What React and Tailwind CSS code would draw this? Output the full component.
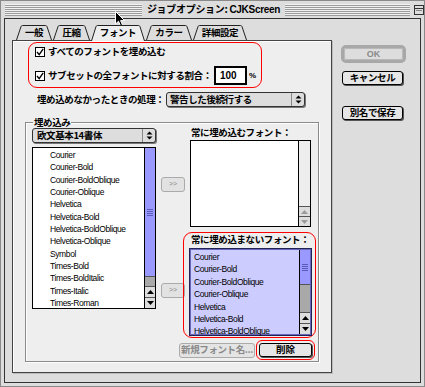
import React from "react";

const STRIPES =
  "bg-[repeating-linear-gradient(to_bottom,#f2f2f2_0px,#f2f2f2_1px,#9a9a9a_1px,#9a9a9a_2px)]";

function Tab({ label, className, active, w }) {
  const h = active ? 16 : 15;
  const d = `M0.5 ${h} L5 1.6 Q5.4 0.5 6.6 0.5 L${w - 6.6} 0.5 Q${w - 5.4} 0.5 ${w - 5} 1.6 L${w - 0.5} ${h}`;
  return (
    <div className={`relative h-[15px] flex items-center justify-center ${className} ${active ? "z-10" : ""}`}>
      <svg className="absolute left-0 top-0 overflow-visible" width={w} height={h} viewBox={`0 0 ${w} ${h}`}>
        <path d={d} fill={active ? "#eeeeee" : "#dddddd"} stroke="#222" strokeWidth="1" />
      </svg>
      <span className="relative text-[9.5px] font-bold leading-none tracking-[-0.4px] pt-[1px]">{label}</span>
    </div>
  );
}

function Check() {
  return (
    <div className="w-[10px] h-[10px] border border-black bg-white flex items-center justify-center shrink-0">
      <svg width="8" height="8" viewBox="0 0 8 8">
        <path d="M1 4 L3.2 6.6 L7.2 0.8" fill="none" stroke="#000" strokeWidth="1.4" />
      </svg>
    </div>
  );
}

function UpDown() {
  return (
    <svg width="7" height="9" viewBox="0 0 7 9">
      <path d="M0.5 3.5 L3.5 0.5 L6.5 3.5Z" fill="#000" />
      <path d="M0.5 5.5 L3.5 8.5 L6.5 5.5Z" fill="#000" />
    </svg>
  );
}

function Arrow({ up, disabled, h = "h-[11px]" }) {
  return (
    <div className={`${h} border-t border-[#555] bg-[#dddddd] flex items-center justify-center shrink-0`}>
      <svg width="7" height="4" viewBox="0 0 7 4">
        <path d={up ? "M0 4 L3.5 0 L7 4Z" : "M0 0 L3.5 4 L7 0Z"} fill={disabled ? "#9a9a9a" : "#000"} />
      </svg>
    </div>
  );
}

function Grip() {
  return (
    <svg width="6" height="7" viewBox="0 0 6 7">
      <path d="M0 0.5H6M0 2.5H6M0 4.5H6M0 6.5H6" stroke="#5a5ab8" strokeWidth="1" />
    </svg>
  );
}

const LEFT_ITEMS = [
  "Courier",
  "Courier-Bold",
  "Courier-BoldOblique",
  "Courier-Oblique",
  "Helvetica",
  "Helvetica-Bold",
  "Helvetica-BoldOblique",
  "Helvetica-Oblique",
  "Symbol",
  "Times-Bold",
  "Times-BoldItalic",
  "Times-Italic",
  "Times-Roman",
];

const RIGHT_ITEMS = [
  "Courier",
  "Courier-Bold",
  "Courier-BoldOblique",
  "Courier-Oblique",
  "Helvetica",
  "Helvetica-Bold",
  "Helvetica-BoldOblique",
];

export default function App() {
  return (
    <div className="relative w-[425px] h-[387px] overflow-hidden bg-[#dddddd] border border-[#8a8a8a] font-['Noto_Sans_CJK_JP',sans-serif] text-black">
      {/* Title bar */}
      <div className="h-[17px] flex items-center">
        <div className={`ml-[4px] w-[137px] h-[12px] ${STRIPES}`} />
        <div className="flex-1 text-center text-[10px] font-bold leading-none tracking-[-0.3px] whitespace-nowrap">
          ジョブオプション: <span className="font-['Liberation_Sans',sans-serif] text-[10px]">CJKScreen</span>
        </div>
        <div className={`w-[125px] h-[12px] ${STRIPES}`} />
        <div className="ml-[4px] w-[10px] h-[10px] border border-[#333] bg-[#dddddd] flex flex-col">
          <div className="h-[3px] border-b border-[#333]" />
          <div className="flex-1 mx-[1px] my-[1px] border-t border-[#888]" />
        </div>
      </div>

      {/* Window frame */}
      <div className="ml-[3px] w-[417px] h-[365px] border border-[#333] flex">
        {/* Left column: tabs + panel */}
        <div className="ml-[7px] flex flex-col">
          <div className="ml-[4px] mt-[6px] h-[15px] flex gap-[1px]">
            <Tab label="一般" w={36} className="w-[36px]" />
            <Tab label="圧縮" w={37} className="w-[37px]" />
            <Tab label="フォント" w={54} className="w-[54px]" active />
            <Tab label="カラー" w={46} className="w-[46px]" />
            <Tab label="詳細設定" w={54} className="w-[54px]" />
          </div>

          {/* Panel */}
          <div className="w-[320px] h-[333px] border border-[#444] bg-[#eeeeee] shadow-[inset_1px_1px_0_#ffffff,1px_1px_0_#bbbbbb] flex flex-col">
            {/* Red box 1 */}
            <div className="ml-[15px] mt-[1px] w-[234px] h-[46px] border border-[#ff0000] rounded-[9px] flex flex-col">
              <div className="ml-[6px] mt-[3px] h-[12px] flex items-center gap-[3px]">
                <Check />
                <span className="text-[9.5px] font-bold leading-none tracking-[-0.4px] whitespace-nowrap">
                  すべてのフォントを埋め込む
                </span>
              </div>
              <div className="ml-[6px] mt-[8px] h-[19px] flex items-center">
                <Check />
                <span className="ml-[3px] w-[166px] text-[9.5px] font-bold leading-none tracking-[-0.4px] whitespace-nowrap">
                  サブセットの全フォントに対する割合：
                </span>
                <div className="w-[33px] h-[19px] border-2 border-black bg-white flex items-center pl-[4px] text-[10px] font-bold leading-none font-['Liberation_Sans',sans-serif]">
                  100
                </div>
                <span className="ml-[2px] text-[8px] font-bold leading-none font-['Liberation_Sans',sans-serif]">%</span>
              </div>
            </div>

            {/* Failure handling row */}
            <div className="mt-[4px] ml-[24px] h-[15px] flex items-center">
              <span className="w-[129px] text-[9.5px] font-bold leading-none tracking-[-0.4px] whitespace-nowrap">
                埋め込めなかったときの処理：
              </span>
              <div className="w-[139px] h-[15px] border border-[#333] rounded-[3px] bg-[#dddddd] shadow-[1px_1px_0_#777777] flex items-center">
                <span className="flex-1 pl-[3px] text-[9.5px] font-bold leading-none tracking-[-0.4px] whitespace-nowrap">
                  警告した後続行する
                </span>
                <div className="w-[13px] h-full border-l border-[#888] flex items-center justify-center">
                  <UpDown />
                </div>
              </div>
            </div>

            {/* Group box */}
            <div className="relative mt-[15px] ml-[12px] w-[294px] h-[240px] border border-[#8a8a8a] shadow-[1px_1px_0_#ffffff,inset_1px_1px_0_#ffffff] flex">
              <span className="absolute left-[7px] -top-[7px] px-[1px] bg-[#eeeeee] text-[9.5px] font-bold leading-[12px] tracking-[-0.4px]">
                埋め込み
              </span>

              {/* Left column */}
              <div className="ml-[6px] w-[124px] flex flex-col">
                <div className="mt-[5px] h-[15px] border border-[#333] rounded-[3px] bg-[#dddddd] shadow-[1px_1px_0_#777777] flex items-center">
                  <span className="flex-1 pl-[4px] text-[9.5px] font-bold leading-none tracking-[-0.4px] whitespace-nowrap">
                    欧文基本14書体
                  </span>
                  <div className="w-[13px] h-full border-l border-[#888] flex items-center justify-center">
                    <UpDown />
                  </div>
                </div>
                <div className="mt-[4px] h-[162px] border border-black bg-white flex">
                  <div className="flex-1 pt-[1px] font-['Liberation_Sans',sans-serif] text-[8.5px] tracking-[-0.4px] text-black">
                    {LEFT_ITEMS.map((t) => (
                      <div key={t} className="h-[12.33px] leading-[12.33px] pl-[17px] whitespace-nowrap">
                        {t}
                      </div>
                    ))}
                  </div>
                  <div className="w-[11px] border-l border-black flex flex-col">
                    <div className="h-[128px] bg-[#9999ff] flex items-center justify-center">
                      <Grip />
                    </div>
                    <div className="flex-1 bg-[#a9a9a9] border-t border-[#555]" />
                    <Arrow up />
                    <Arrow />
                  </div>
                </div>
              </div>

              {/* Middle column */}
              <div className="ml-[5px] w-[24px] flex flex-col">
                <div className="mt-[54px] h-[15px] border border-[#aaaaaa] rounded-[3px] bg-[#e2e2e2] flex items-center justify-center text-[7px] text-[#888] font-['Liberation_Sans',sans-serif]">
                  &gt;&gt;
                </div>
                <div className="mt-[91px] h-[15px] border border-[#aaaaaa] rounded-[3px] bg-[#e2e2e2] flex items-center justify-center text-[7px] text-[#888] font-['Liberation_Sans',sans-serif]">
                  &gt;&gt;
                </div>
              </div>

              {/* Right column */}
              <div className="-ml-[2px] w-[133px] flex flex-col">
                <div className="mt-[2px] h-[15px] pl-[8px] flex items-center text-[9.5px] font-bold leading-none tracking-[-0.4px] whitespace-nowrap">
                  常に埋め込むフォント：
                </div>
                <div className="ml-[7px] w-[121px] h-[87px] border border-black bg-white flex">
                  <div className="flex-1" />
                  <div className="w-[12px] border-l border-black bg-[#eeeeee] flex flex-col justify-end">
                    <Arrow up disabled h="h-[10px]" />
                    <Arrow disabled h="h-[10px]" />
                  </div>
                </div>

                {/* Red box 2 */}
                <div className="mt-[5px] w-[133px] h-[106px] border border-[#ff0000] rounded-[9px] flex flex-col">
                  <div className="h-[14px] pl-[7px] flex items-center text-[9.5px] font-bold leading-none tracking-[-0.4px] whitespace-nowrap">
                    常に埋め込まないフォント：
                  </div>
                  <div className="mt-[1px] ml-[5px] w-[123px] h-[88px] border border-[#222255] shadow-[inset_0_0_0_1px_#6666bb] bg-[#ccccff] flex p-[1px]">
                    <div className="flex-1 pt-[1px] font-['Liberation_Sans',sans-serif] text-[8.5px] tracking-[-0.4px] text-black">
                      {RIGHT_ITEMS.map((t) => (
                        <div key={t} className="h-[12.4px] leading-[12.4px] pl-[3px] whitespace-nowrap">
                          {t}
                        </div>
                      ))}
                    </div>
                    <div className="w-[11px] border-l border-black flex flex-col">
                      <div className="h-[34px] bg-[#9999ff] flex items-center justify-center">
                        <Grip />
                      </div>
                      <div className="flex-1 bg-[#a9a9a9] border-t border-[#555]" />
                      <Arrow up />
                      <Arrow />
                    </div>
                  </div>
                </div>

                {/* Bottom buttons */}
                <div className="mt-[2px] h-[20px] flex items-center">
                  <div className="-ml-[4px] w-[76px] h-[15px] border border-[#aaaaaa] rounded-[3px] bg-[#e4e4e4] flex items-center justify-center text-[9.5px] font-bold text-[#8a8a8a] leading-none tracking-[-0.4px] whitespace-nowrap">
                    新規フォント名...
                  </div>
                  <div className="ml-[1px] w-[59px] h-[20px] border border-[#ff0000] rounded-[6px] flex items-center">
                    <div className="ml-[2px] w-[53px] h-[14px] border border-black rounded-[3px] bg-[#e6e6e6] shadow-[1px_1px_0_#555555] flex items-center justify-center text-[9.5px] font-bold leading-none">
                      削除
                    </div>
                  </div>
                </div>
              </div>
            </div>
          </div>
        </div>

        {/* Right column: buttons */}
        <div className="ml-[9px] pt-[26px] flex flex-col">
          <div className="w-[65px] h-[18px] border-[3px] border-[#a8a8a8] rounded-[5px] bg-[#dddddd] flex items-center justify-center">
            <div className="w-full h-full border border-[#b8b8b8] rounded-[2px] flex items-center justify-center text-[9px] font-bold text-[#8a8a8a] font-['Liberation_Sans',sans-serif] leading-none">
              OK
            </div>
          </div>
          <div className="mt-[8px] ml-[1px] w-[61px] h-[14px] border border-black rounded-[3px] bg-[#e6e6e6] shadow-[1px_1px_0_#555555] flex items-center justify-center text-[9.5px] font-bold leading-none tracking-[-0.4px]">
            キャンセル
          </div>
          <div className="mt-[21px] ml-[1px] w-[61px] h-[14px] border border-black rounded-[3px] bg-[#e6e6e6] shadow-[1px_1px_0_#555555] flex items-center justify-center text-[9.5px] font-bold leading-none tracking-[-0.4px]">
            別名で保存
          </div>
        </div>
      </div>

      {/* Mouse cursor */}
      <svg className="absolute left-[114px] top-[10px]" width="11" height="17" viewBox="0 0 11 17">
        <path d="M0.5 0.5 L0.5 13 L3.5 10.2 L5.6 15.2 L7.6 14.3 L5.6 9.6 L9.6 9.6 Z" fill="#000" stroke="#fff" strokeWidth="1" />
      </svg>
    </div>
  );
}
